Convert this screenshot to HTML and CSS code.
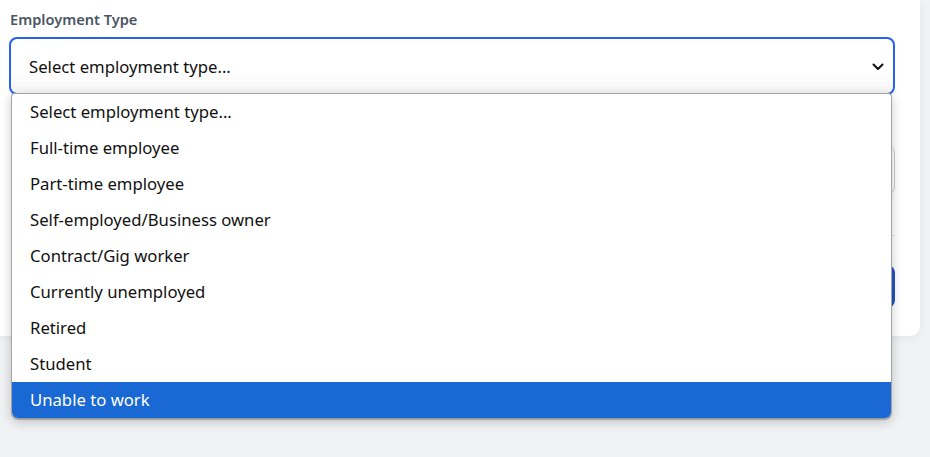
FILE: index.html
```html
<!DOCTYPE html>
<html lang="en">
<head>
<meta charset="utf-8">
<title>Employment Type</title>
<link rel="stylesheet" href="styles.css">
</head>
<body>
<div class="card">
  <div class="field">
    <label class="label">Employment Type</label>
    <div class="select-wrap">
      <div class="select">
        <span>Select employment type...</span>
        <svg class="chev" width="12" height="8" viewBox="0 0 12 8"><path d="M1.5 1.5 L6 6 L10.5 1.5" fill="none" stroke="#111" stroke-width="2" stroke-linecap="round" stroke-linejoin="round"/></svg>
      </div>
      <ul class="dropdown">
        <li>Select employment type...</li>
        <li>Full-time employee</li>
        <li>Part-time employee</li>
        <li>Self-employed/Business owner</li>
        <li>Contract/Gig worker</li>
        <li>Currently unemployed</li>
        <li>Retired</li>
        <li>Student</li>
        <li class="active">Unable to work</li>
      </ul>
    </div>
  </div>
  <div class="field2">
    <div class="input"></div>
  </div>
  <hr class="sep">
  <div class="button"></div>
</div>
</body>
</html>
```
FILE: styles.css
```css
html, body {
  margin: 0;
  padding: 0;
}
body {
  background: #f1f2f4;
  width: 930px;
  height: 457px;
  overflow: hidden;
  font-family: "Noto Sans", "Open Sans", sans-serif;
}
.card {
  width: 886px;
  padding: 9px 25px 28px 9px;
  background: #fff;
  border-radius: 0 0 10px 0;
  box-shadow: 0 2px 10px rgba(0,0,0,0.06);
}
.label {
  display: block;
  margin-left: 1px;
  font-size: 14.6px;
  font-weight: 600;
  color: #4b5563;
  line-height: 20px;
  margin-bottom: 8px;
}
.select-wrap {
  position: relative;
}
.select {
  height: 54px;
  border: 2px solid #2563eb;
  border-radius: 8px;
  display: flex;
  align-items: center;
  justify-content: space-between;
  padding: 0 9px 0 18px;
  font-size: 16.7px;
  color: #111;
  background: linear-gradient(#fff 60%, #f6f6f6);
}
.chev {
  margin-top: 1px;
}
.dropdown {
  position: absolute;
  top: 56px;
  left: 2px;
  width: 879px;
  margin: 0;
  padding: 0;
  list-style: none;
  background: #fff;
  border: 1px solid #a6a6a6;
  border-bottom-color: #999;
  border-radius: 4px 4px 7px 7px;
  box-shadow: 0 1px 1px rgba(0,0,0,0.2), 0 3px 12px rgba(0,0,0,0.2);
  overflow: hidden;
  z-index: 5;
}
.dropdown li {
  height: 36px;
  line-height: 36px;
  padding-left: 18px;
  font-size: 16.7px;
  color: #111;
}
.dropdown li.active {
  background: #1a68d4;
  color: #fff;
}
.field2 {
  padding-top: 50px;
  padding-left: 4px;
}
.input {
  height: 48px;
  border: 1px solid #c9ccd1;
  border-radius: 8px;
}
.sep {
  margin: 40px 0 0 4px;
  border: 0;
  border-top: 1px solid #e5e7eb;
}
.button {
  margin: 29px 0 0 4px;
  height: 43px;
  border-radius: 8px;
  background: #2552c4;
}
```
